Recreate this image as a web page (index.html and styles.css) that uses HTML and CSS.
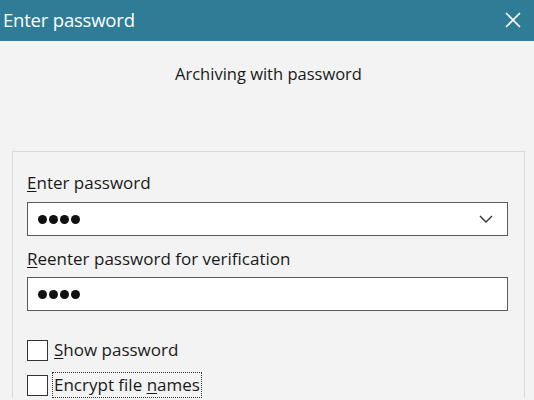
FILE: index.html
```html
<html>
<head>
    <meta charset="UTF-8">
    <meta name="viewport" content="width=device-width, initial-scale=1.0">
    <title>Enter password</title>
    <link rel="stylesheet" href="styles.css">
</head>
<body>
    <div class="titlebar">
        <span class="title">Enter password</span>
        <svg class="close" width="16" height="16" viewBox="0 0 16 16">
            <path d="M1 1 L15 15 M15 1 L1 15" stroke="#ffffff" stroke-width="1.6" fill="none"/>
        </svg>
    </div>

    <div class="heading">Archiving with password</div>

    <div class="group">
        <label class="field-label"><u>E</u>nter password</label>
        <div class="combo">
            <span class="dots"><i></i><i></i><i></i><i></i></span>
            <svg class="chevron" width="14" height="8" viewBox="0 0 14 8">
                <path d="M1 1 L7 7 L13 1" stroke="#333333" stroke-width="1.4" fill="none"/>
            </svg>
        </div>

        <label class="field-label second"><u>R</u>eenter password for verification</label>
        <div class="combo">
            <span class="dots"><i></i><i></i><i></i><i></i></span>
        </div>

        <div class="check-row first">
            <span class="box"></span>
            <span class="check-text"><u>S</u>how password</span>
        </div>
        <div class="check-row">
            <span class="box"></span>
            <span class="check-text focused">Encrypt file <u>n</u>ames</span>
        </div>
    </div>
</body>
</html>
```

FILE: styles.css
```css
body {
    margin: 0;
    font-family: 'Open Sans', 'Noto Sans', sans-serif;
    background-color: #f3f3f3;
    color: #1a1a1a;
    overflow: hidden;
}

.titlebar {
    height: 39px;
    background-color: #2f7c96;
    color: #ffffff;
    display: flex;
    align-items: center;
    justify-content: space-between;
    padding: 0 13px 2px 3px;
}

.title {
    font-size: 18.5px;
    letter-spacing: -0.2px;
}

.heading {
    text-align: center;
    font-size: 16.5px;
    margin-top: 21px;
    padding-left: 3px;
    line-height: 24px;
}

.group {
    margin: 65px 9px 0 12px;
    border: 1px solid #dadada;
    border-bottom: none;
    padding: 15px 16px 0 14px;
}

.field-label {
    display: block;
    font-size: 17px;
    line-height: 24px;
    margin-top: 4px;
    margin-bottom: 7px;
}

.field-label.second {
    margin-top: 11px;
    margin-bottom: 6px;
}

.field-label u,
.check-text u {
    text-decoration-thickness: 1px;
    text-underline-offset: 2px;
}

.combo {
    height: 32px;
    background: #ffffff;
    border: 1px solid #5a5a5a;
    display: flex;
    align-items: center;
    justify-content: space-between;
    padding: 0 14px 0 10px;
}

.dots {
    display: flex;
    gap: 2px;
}

.dots i {
    width: 9px;
    height: 9px;
    border-radius: 50%;
    background: #111111;
}

.check-row {
    display: flex;
    align-items: center;
    height: 26px;
    margin-bottom: 9px;
}

.check-row.first {
    margin-top: 26px;
}

.box {
    width: 19px;
    height: 19px;
    border: 1px solid #333333;
    background: #ffffff;
    margin-right: 5px;
}

.check-text {
    font-size: 17px;
    line-height: 24px;
    padding: 0 1px;
}

.focused {
    outline: 1px dotted #333333;
}
```
